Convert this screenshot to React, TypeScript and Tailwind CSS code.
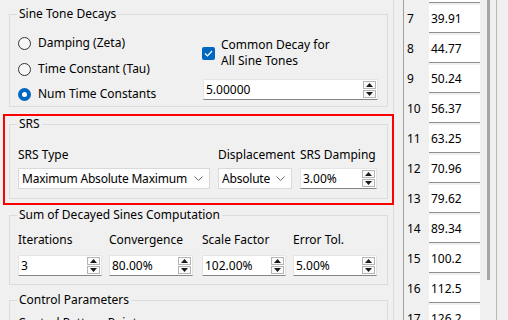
import React from 'react';

const GroupBox: React.FC<{ title: string; className?: string; children?: React.ReactNode }> = ({ title, className = '', children }) => (
  <div className={`relative shrink-0 border border-[#dcdcdc] ${className}`}>
    <span className="absolute left-[7px] top-[-9px] px-[2px] bg-[#f0f0f0] leading-[16px] whitespace-nowrap">{title}</span>
    {children}
  </div>
);

const Arrow: React.FC<{ up?: boolean }> = ({ up }) => (
  <svg width="7" height="4" viewBox="0 0 7 4">
    <path d={up ? 'M0 4 L3.5 0 L7 4 Z' : 'M0 0 L3.5 4 L7 0 Z'} fill="#1a1a1a" />
  </svg>
);

const SpinBox: React.FC<{ value: string; className?: string }> = ({ value, className = '' }) => (
  <div className={`flex items-center h-[21px] bg-white border border-[#e4e4e4] border-b-[#868686] ${className}`}>
    <span className="flex-1 pl-[2px] leading-[16px]">{value}</span>
    <div className="flex flex-col gap-[1px] mr-[1px]">
      <div className="w-[13px] h-[8px] flex items-center justify-center border border-[#b4b4b4] bg-[#fbfbfb]">
        <Arrow up />
      </div>
      <div className="w-[13px] h-[8px] flex items-center justify-center border border-[#b4b4b4] bg-[#fbfbfb]">
        <Arrow />
      </div>
    </div>
  </div>
);

const Combo: React.FC<{ value: string; className?: string }> = ({ value, className = '' }) => (
  <div className={`flex items-center h-[21px] bg-[#fdfdfd] border border-[#d9d9d9] ${className}`}>
    <span className="flex-1 min-w-0 pl-[3px] leading-[16px] whitespace-nowrap overflow-hidden tracking-[-0.2px]">{value}</span>
    <svg width="9" height="5" viewBox="0 0 9 5" className="shrink-0 ml-[3px] mr-[6px]">
      <path d="M0.5 0.5 L4.5 4.5 L8.5 0.5" fill="none" stroke="#6b6b6b" strokeWidth="1" />
    </svg>
  </div>
);

const Radio: React.FC<{ label: string; checked?: boolean }> = ({ label, checked }) => (
  <div className="flex items-center h-[16px] gap-[7px]">
    {checked ? (
      <span className="w-[13px] h-[13px] rounded-full bg-[#0067c0] flex items-center justify-center">
        <span className="w-[5px] h-[5px] rounded-full bg-white" />
      </span>
    ) : (
      <span className="w-[13px] h-[13px] rounded-full border border-[#333] bg-[#f7f7f7]" />
    )}
    <span className="leading-[16px]">{label}</span>
  </div>
);

const rows: [number, string][] = [
  [6, '35.57'],
  [7, '39.91'],
  [8, '44.77'],
  [9, '50.24'],
  [10, '56.37'],
  [11, '63.25'],
  [12, '70.96'],
  [13, '79.62'],
  [14, '89.34'],
  [15, '100.2'],
  [16, '112.5'],
  [17, '126.2'],
];

export default function App() {
  return (
    <div className="relative w-[508px] h-[320px] overflow-hidden flex bg-[#f0f0f0] text-black text-[12px] font-['Segoe_UI','Noto_Sans',sans-serif]">
      {/* Left settings panel */}
      <div className="w-[394px] h-full border-r border-[#dcdcdc] pl-[9px] pr-[5px] flex flex-col">
        <GroupBox title="Sine Tone Decays" className="mt-[14px] h-[93px] flex">
          <div className="w-[192px] pl-[8px] pt-[20px] flex flex-col">
            <Radio label="Damping (Zeta)" />
            <div className="mt-[10px]">
              <Radio label="Time Constant (Tau)" />
            </div>
            <div className="mt-[9px]">
              <Radio label="Num Time Constants" checked />
            </div>
          </div>
          <div className="flex-1 pt-[22px] pr-[9px] flex flex-col">
            <div className="flex items-center gap-[6px] h-[32px]">
              <span className="w-[13px] h-[13px] rounded-[2px] bg-[#0067c0] flex items-center justify-center">
                <svg width="9" height="7" viewBox="0 0 9 7">
                  <path d="M1 3.5 L3.5 6 L8 1" fill="none" stroke="white" strokeWidth="1.2" />
                </svg>
              </span>
              <span className="leading-[16px]">
                Common Decay for
                <br />
                All Sine Tones
              </span>
            </div>
            <SpinBox value="5.00000" className="mt-[10px] ml-[1px]" />
          </div>
        </GroupBox>

        <GroupBox title="SRS" className="mt-[17px] h-[75px] pl-[8px] pt-[22px] flex gap-[8px]">
          <div className="w-[192px]">
            <div className="leading-[16px]">SRS Type</div>
            <Combo value="Maximum Absolute Maximum" className="mt-[5px]" />
          </div>
          <div className="w-[74px]">
            <div className="leading-[16px] whitespace-nowrap">Displacement</div>
            <Combo value="Absolute" className="mt-[5px]" />
          </div>
          <div className="w-[77px]">
            <div className="leading-[16px] whitespace-nowrap">SRS Damping</div>
            <SpinBox value="3.00%" className="mt-[5px]" />
          </div>
        </GroupBox>

        <GroupBox title="Sum of Decayed Sines Computation" className="mt-[16px] h-[70px] pl-[8px] pt-[16px] flex">
          <div className="w-[84px]">
            <div className="leading-[16px]">Iterations</div>
            <SpinBox value="3" className="mt-[7px]" />
          </div>
          <div className="w-[84px] ml-[7px]">
            <div className="leading-[16px]">Convergence</div>
            <SpinBox value="80.00%" className="mt-[7px]" />
          </div>
          <div className="w-[84px] ml-[9px]">
            <div className="leading-[16px]">Scale Factor</div>
            <SpinBox value="102.00%" className="mt-[7px]" />
          </div>
          <div className="w-[84px] ml-[7px]">
            <div className="leading-[16px]">Error Tol.</div>
            <SpinBox value="5.00%" className="mt-[7px]" />
          </div>
        </GroupBox>

        <GroupBox title="Control Parameters" className="mt-[15px] h-[60px] pl-[8px] pt-[14px]">
          <div className="leading-[16px]">Control Pattern Points</div>
        </GroupBox>
      </div>

      {/* Right frequency list */}
      <div className="ml-[9px] h-full w-[94px] border-l border-[#a0a0a0] border-r border-r-[#b8b8b8] relative">
        <div className="mt-[-25px] flex flex-col gap-[2px]">
          {rows.map(([n, v]) => (
            <div key={n} className="flex h-[28px] shrink-0">
              <span className="w-[25px] pl-[3px] pt-[6px] leading-[16px]">{n}</span>
              <span className="w-[51px] bg-white border-b border-[#8e8e8e] pl-[2px] pt-[6px] leading-[16px]">{v}</span>
            </div>
          ))}
        </div>
        <div className="absolute left-[83px] top-0 w-[3px] h-[280px] bg-[#a6a6a6]" />
      </div>

      {/* Highlight annotation */}
      <div className="absolute left-[3px] top-[114px] w-[391px] h-[91px] border-2 border-[#ff0000] pointer-events-none" />
    </div>
  );
}
